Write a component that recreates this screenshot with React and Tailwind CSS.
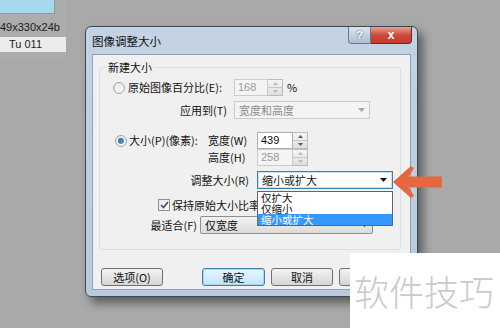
import React from "react";

const cjk = "font-['Noto_Sans_CJK_SC','Noto_Sans',sans-serif]";

function Spinner({ disabled }) {
  const tri = disabled ? "#b8b8b8" : "#5a5a5a";
  return (
    <div className="flex h-full w-[15px] flex-col border border-l-0 border-[#b9bcc2] bg-gradient-to-b from-[#f6f6f6] to-[#dedede]">
      <div className="flex flex-1 items-center justify-center border-b border-[#c8c8c8]">
        <svg width="5" height="3" viewBox="0 0 5 3">
          <polygon points="0,3 2.5,0 5,3" fill={tri} />
        </svg>
      </div>
      <div className="flex flex-1 items-center justify-center">
        <svg width="5" height="3" viewBox="0 0 5 3">
          <polygon points="0,0 5,0 2.5,3" fill={tri} />
        </svg>
      </div>
    </div>
  );
}

function Arrow({ color = "#111" }) {
  return (
    <svg width="7" height="4" viewBox="0 0 7 4">
      <polygon points="0,0 7,0 3.5,4" fill={color} />
    </svg>
  );
}

function Radio({ checked }) {
  return (
    <div className="flex h-[12px] w-[12px] items-center justify-center rounded-full border border-[#9aa4ae] bg-gradient-to-br from-[#e4e4e4] to-[#fafafa]">
      {checked && (
        <div className="h-[6px] w-[6px] rounded-full bg-gradient-to-br from-[#2f5f8f] to-[#6fa6d6]" />
      )}
    </div>
  );
}

function Button({ children, primary, className = "" }) {
  return (
    <div
      className={`flex h-[18px] items-center justify-center rounded-[3px] border text-[11px] text-[#111] ${
        primary
          ? "border-[#3c7fb1] bg-gradient-to-b from-[#eaf6fd] to-[#bee6fd] shadow-[inset_0_0_0_1px_#a7d9f5]"
          : "border-[#707070] bg-gradient-to-b from-[#f2f2f2] to-[#d6d6d6]"
      } ${className}`}
    >
      {children}
    </div>
  );
}

export default function App() {
  return (
    <div className={`relative h-[328px] w-[500px] overflow-hidden bg-[#a9a9a9] ${cjk}`}>
      {/* desktop thumbnail column */}
      <div className="flex h-[60px] w-[66px] flex-col bg-[#acacac]">
        <div className="h-[14px] w-[55px] border-b border-r border-[#8c9aa2] bg-[#a6d8ee]" />
        <div className="mt-[6px] font-['Liberation_Sans',sans-serif] text-[11px] leading-[14px] text-[#1b1b1b]">
          49x330x24b
        </div>
        <div className="mt-[3px] flex h-[15px] w-[66px] items-center bg-[#ececec] pl-[9px] font-['Liberation_Sans',sans-serif] text-[11px] text-[#222]">
          Tu 011
        </div>
      </div>

      {/* dialog window */}
      <div className="absolute left-[85px] top-[26px] h-[271px] w-[333px] rounded-[6px] border border-[#3e4954] bg-gradient-to-b from-[#c3d3e4] to-[#b9cadd] shadow-[5px_6px_10px_rgba(0,0,0,0.45)]">
        <div className="flex h-[27px] items-start">
          <div className="pl-[6px] pt-[7px] text-[11.5px] leading-[15px] text-[#111]">
            图像调整大小
          </div>
          <div className="ml-auto mr-[5px] flex">
            <div className="flex h-[17px] w-[23px] items-center justify-center rounded-bl-[4px] border border-t-0 border-[#6a7a8c] bg-gradient-to-b from-[#d9e3ee] to-[#aebfd2] font-['Liberation_Sans',sans-serif] text-[11px] font-bold text-white [text-shadow:0_0_2px_#33475c]">
              ?
            </div>
            <div className="flex h-[17px] w-[41px] items-center justify-center rounded-br-[4px] border border-l-0 border-t-0 border-[#6a2a24] bg-gradient-to-b from-[#e8a08f] via-[#cc4a3a] to-[#c23a2c] font-['Liberation_Sans',sans-serif] text-[12px] font-bold text-white">
              x
            </div>
          </div>
        </div>

        <div className="mx-[6px] h-[236px] border border-[#8ea3ba] bg-[#f0f0f0]">
          <div className="ml-[6px] mt-[12px] flex h-[183px] w-[302px] flex-col rounded-[3px] border border-[#d5dfe5] text-[11px] text-[#111]">
            <div className="relative">
              <div className="absolute -top-[9px] left-[6px] bg-[#f0f0f0] px-[2px] leading-[16px]">
                新建大小
              </div>
            </div>

            {/* row 1 */}
            <div className="mt-[11px] flex h-[17px] items-center">
              <div className="ml-[13px]">
                <Radio />
              </div>
              <span className="ml-[3px] w-[106px] whitespace-nowrap">原始图像百分比(E):</span>
              <div className="flex h-full">
                <div className="flex w-[34px] items-center border border-[#c9cbcf] bg-[#f4f4f4] pl-[3px] font-['Liberation_Sans',sans-serif] text-[11px] text-[#9a9a9a]">
                  168
                </div>
                <Spinner disabled />
              </div>
              <span className="ml-[4px]">%</span>
            </div>

            {/* row 2 */}
            <div className="mt-[5px] flex h-[18px] items-center">
              <span className="w-[127px] whitespace-nowrap text-right">应用到(T)</span>
              <div className="ml-[7px] flex h-full w-[136px] items-center justify-between border border-[#c9cbcf] bg-[#f4f4f4] px-[4px] text-[#8c8c8c]">
                <span>宽度和高度</span>
                <Arrow color="#a8a8a8" />
              </div>
            </div>

            {/* row 3 */}
            <div className="mt-[13px] flex h-[17px] items-center">
              <div className="ml-[15px]">
                <Radio checked />
              </div>
              <span className="ml-[2px] w-[79px] whitespace-nowrap">大小(P)(像素):</span>
              <span className="w-[49px] whitespace-nowrap">宽度(W)</span>
              <div className="flex h-full">
                <div className="flex w-[36px] items-center border border-[#abadb3] bg-white pl-[3px] font-['Liberation_Sans',sans-serif] text-[11px] text-[#111]">
                  439
                </div>
                <Spinner />
              </div>
            </div>

            {/* row 4 */}
            <div className="flex h-[17px] items-center">
              <span className="ml-[108px] w-[49px] whitespace-nowrap">高度(H)</span>
              <div className="flex h-full">
                <div className="flex w-[36px] items-center border border-[#c9cbcf] bg-[#f4f4f4] pl-[3px] font-['Liberation_Sans',sans-serif] text-[11px] text-[#9a9a9a]">
                  258
                </div>
                <Spinner disabled />
              </div>
            </div>

            {/* row 5 */}
            <div className="mt-[5px] flex h-[18px] items-center">
              <span className="w-[149px] whitespace-nowrap text-right">调整大小(R)</span>
              <div className="ml-[8px] flex h-full w-[136px] items-center justify-between border border-[#3c7fb1] bg-white pl-[4px] pr-[5px] shadow-[inset_0_0_0_1px_#c4e3f8]">
                <span>缩小或扩大</span>
                <Arrow />
              </div>
            </div>

            {/* row 6 */}
            <div className="mt-[7px] flex h-[18px] items-center">
              <div className="ml-[58px] flex h-[12px] w-[12px] items-center justify-center border border-[#8f8f8f] bg-gradient-to-br from-[#e6e6e6] to-[#fbfbfb]">
                <svg width="9" height="8" viewBox="0 0 9 8">
                  <polyline points="1,4 3.5,6.5 8,1" fill="none" stroke="#3a4f6b" strokeWidth="1.6" />
                </svg>
              </div>
              <span className="ml-[2px] whitespace-nowrap">保持原始大小比率</span>
            </div>

            {/* row 7 */}
            <div className="mt-[2px] flex h-[18px] items-center">
              <span className="w-[97px] whitespace-nowrap text-right">最适合(F)</span>
              <div className="ml-[3px] flex h-full w-[173px] items-center justify-between rounded-[2px] border border-[#8e8f8f] bg-gradient-to-b from-[#f2f2f2] to-[#dcdcdc] pl-[4px] pr-[4px]">
                <span>仅宽度</span>
                <Arrow />
              </div>
            </div>
          </div>

          {/* buttons */}
          <div className="ml-[8px] mt-[18px] flex">
            <Button className="w-[62px]">选项(O)</Button>
            <Button primary className="ml-[39px] w-[63px]">
              确定
            </Button>
            <Button className="ml-[6px] w-[62px]">取消</Button>
            <Button className="ml-[6px] w-[62px]" />
          </div>
        </div>
      </div>

      {/* open dropdown list */}
      <div className="absolute left-[257px] top-[191px] flex h-[35px] w-[136px] flex-col border border-[#646464] bg-white text-[10.5px] text-[#111]">
        <div className="h-[11px] pl-[3px] leading-[11px]">仅扩大</div>
        <div className="h-[11px] pl-[3px] leading-[11px]">仅缩小</div>
        <div className="h-[11px] bg-[#3399ff] pl-[3px] leading-[11px] text-white">
          缩小或扩大
        </div>
      </div>

      {/* orange pointer arrow */}
      <svg className="absolute left-[392px] top-[165px]" width="50" height="34" viewBox="0 0 50 34">
        <polygon
          points="1,17 19,1 22,3 17,11.5 50,11.5 50,22.5 17,22.5 22,31 19,33"
          fill="#e4673f"
        />
      </svg>

      {/* watermark */}
      <div className="absolute left-[350px] top-[253px] flex h-[75px] w-[150px] items-center bg-white pl-[4px]">
        <span className="text-[35px] font-light leading-[40px] text-[#cacaca]">软件技巧</span>
      </div>
    </div>
  );
}
